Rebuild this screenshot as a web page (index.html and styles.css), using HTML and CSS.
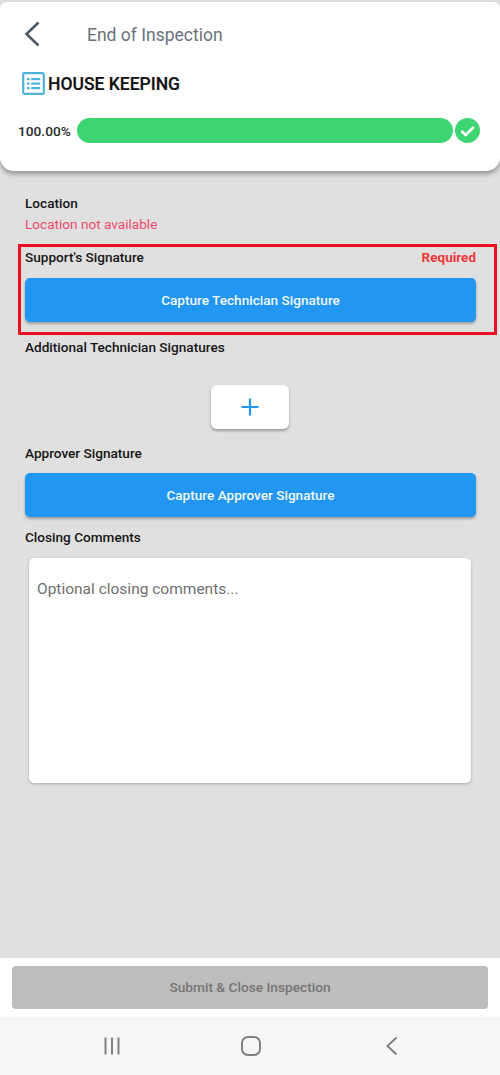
FILE: index.html
```html
<!DOCTYPE html>
<html lang="en">
<head>
<meta charset="utf-8">
<title>End of Inspection</title>
<link rel="stylesheet" href="styles.css">
</head>
<body>
<div class="screen">
  <header class="header">
    <div class="title-row">
      <svg class="back" width="18" height="28" viewBox="0 0 18 28"><path d="M15.5 2.5 L3.5 14 L15.5 25.5" fill="none" stroke="#4f5b66" stroke-width="2.6"/></svg>
      <span class="title">End of Inspection</span>
    </div>
    <div class="section-row">
      <svg class="list-icon" width="23" height="23" viewBox="0 0 23 23">
        <rect x="1.2" y="1.2" width="20.6" height="20.6" fill="none" stroke="#4fb3d9" stroke-width="2.2" rx="1"/>
        <g fill="#4fb3d9">
          <rect x="5" y="6" width="2.6" height="2.2"/><rect x="9.2" y="6" width="9" height="2.2"/>
          <rect x="5" y="10.5" width="2.6" height="2.2"/><rect x="9.2" y="10.5" width="9" height="2.2"/>
          <rect x="5" y="15" width="2.6" height="2.2"/><rect x="9.2" y="15" width="9" height="2.2"/>
        </g>
      </svg>
      <span class="section-name">HOUSE KEEPING</span>
    </div>
    <div class="progress-row">
      <span class="percent">100.00%</span>
      <div class="bar"></div>
      <svg class="check" width="25" height="25" viewBox="0 0 25 25"><circle cx="12.5" cy="12.5" r="12.5" fill="#3dd571"/><path d="M6.5 13 L10.6 17 L18.8 9" fill="none" stroke="#fff" stroke-width="2.6"/></svg>
    </div>
  </header>

  <main class="content">
    <div class="label">Location</div>
    <div class="location-error">Location not available</div>

    <section class="highlight">
      <div class="label-row">
        <span class="label">Support's Signature</span>
        <span class="required">Required</span>
      </div>
      <button class="capture capture-tech">Capture Technician Signature</button>
    </section>

    <div class="label label-additional">Additional Technician Signatures</div>
    <div class="add-row">
      <button class="add-btn" aria-label="Add">
        <svg width="20" height="20" viewBox="0 0 20 20"><path d="M10 1.5 V18.5 M1.5 10 H18.5" stroke="#2196f3" stroke-width="2.2" fill="none"/></svg>
      </button>
    </div>

    <div class="label label-approver">Approver Signature</div>
    <button class="capture capture-approver">Capture Approver Signature</button>

    <div class="label label-closing">Closing Comments</div>
    <div class="comments">Optional closing comments...</div>
  </main>

  <div class="footer">
    <button class="submit">Submit &amp; Close Inspection</button>
  </div>

  <nav class="sys-nav">
    <svg width="20" height="20" viewBox="0 0 20 20"><path d="M3.5 1.5 V18.5 M10 1.5 V18.5 M16.5 1.5 V18.5" stroke="#808080" stroke-width="2" fill="none"/></svg>
    <svg width="22" height="22" viewBox="0 0 22 22"><rect x="2" y="2" width="18" height="18" rx="6" fill="none" stroke="#808080" stroke-width="2"/></svg>
    <svg width="14" height="20" viewBox="0 0 14 20"><path d="M11.5 1.5 L2.5 10 L11.5 18.5" stroke="#808080" stroke-width="2" fill="none"/></svg>
  </nav>
</div>
</body>
</html>
```

FILE: styles.css
```css
* { box-sizing: border-box; }
html, body { margin: 0; padding: 0; }
body { font-family: Roboto, "Liberation Sans", sans-serif; background: #e0e0e0; }
button { font-family: inherit; border: 0; cursor: pointer; }

.screen { width: 500px; height: 1075px; display: flex; flex-direction: column; overflow: hidden; padding-top: 2px; }

.header {
  height: 169px;
  background: #fff;
  border-radius: 6px 6px 14px 14px;
  box-shadow: 0 3px 5px rgba(0,0,0,.35);
  padding: 18px 5px 0 18px;
  position: relative;
}
.title-row { display: flex; align-items: center; height: 28px; padding-left: 5px; }
.title { margin-left: 46px; padding-top: 1px; font-size: 17.5px; color: #69727b; }
.section-row { display: flex; align-items: center; margin-top: 23px; padding-left: 4px; height: 24px; }
.list-icon { flex: none; }
.section-name { margin-left: 3px; padding-top: 2px; font-size: 17.5px; font-weight: 500; color: #111; -webkit-text-stroke: 0.2px #111; }
.progress-row { display: flex; align-items: center; margin-top: 23px; height: 25px; }
.percent { font-size: 13.7px; font-weight: 500; color: #2a2a2a; width: 59px; }
.bar { width: 376px; height: 25px; border-radius: 13px; background: #3dd571; }
.check { margin-left: 2px; flex: none; }

.content { flex: 1; padding: 24px 24px 0 25px; display: flex; flex-direction: column; }
.label { font-size: 13.6px; font-weight: 500; color: #151515; line-height: 16px; }
.location-error { font-size: 13.6px; color: #ee4b6e; line-height: 18px; margin-top: 4px; }

.highlight { margin: 11px -21px 0 -7px; border: 3px solid #ed1024; padding: 0 19px 10px 4px; height: 91px; }
.label-row { display: flex; justify-content: space-between; align-items: center; height: 20px; }
.required { font-size: 13.5px; font-weight: 700; color: #f0383c; padding-right: 0; margin-right: -1px; }

.capture {
  display: block; width: 451px; height: 44px; border-radius: 5px;
  background: #2196f3; color: #f2f8fe; font-size: 13.6px; font-weight: 500;
  box-shadow: 0 2px 3px rgba(0,0,0,.3);
}
.capture-tech { margin-top: 11px; }
.label-additional { margin-top: 4px; }

.add-row { display: flex; justify-content: center; margin-top: 30px; padding-right: 1px; }
.add-btn {
  width: 78px; height: 44px; border-radius: 6px; background: #fff;
  display: flex; align-items: center; justify-content: center;
  box-shadow: 0 2px 3px rgba(0,0,0,.3);
}
.label-approver { margin-top: 16px; }
.capture-approver { margin-top: 12px; height: 44px; }
.label-closing { margin-top: 12px; }

.comments {
  margin: 13px 5px 0 4px; height: 225px; background: #fff; border-radius: 5px;
  padding: 22px 8px; font-size: 15.5px; line-height: 18px; color: #6f6f6f;
  box-shadow: 0 1px 3px rgba(0,0,0,.25);
}

.footer { height: 59px; background: #fff; padding: 8px 12px; flex: none; }
.submit {
  display: block; width: 100%; height: 43px; border-radius: 4px; padding-bottom: 3px;
  background: #bdbdbd; color: #757575; font-size: 13.7px; font-weight: 500;
}

.sys-nav { height: 58px; flex: none; background: #f6f6f6; position: relative; display: grid; grid-template-columns: 223px 56px 225px; align-items: center; justify-items: center; padding-bottom: 1px; }
```
